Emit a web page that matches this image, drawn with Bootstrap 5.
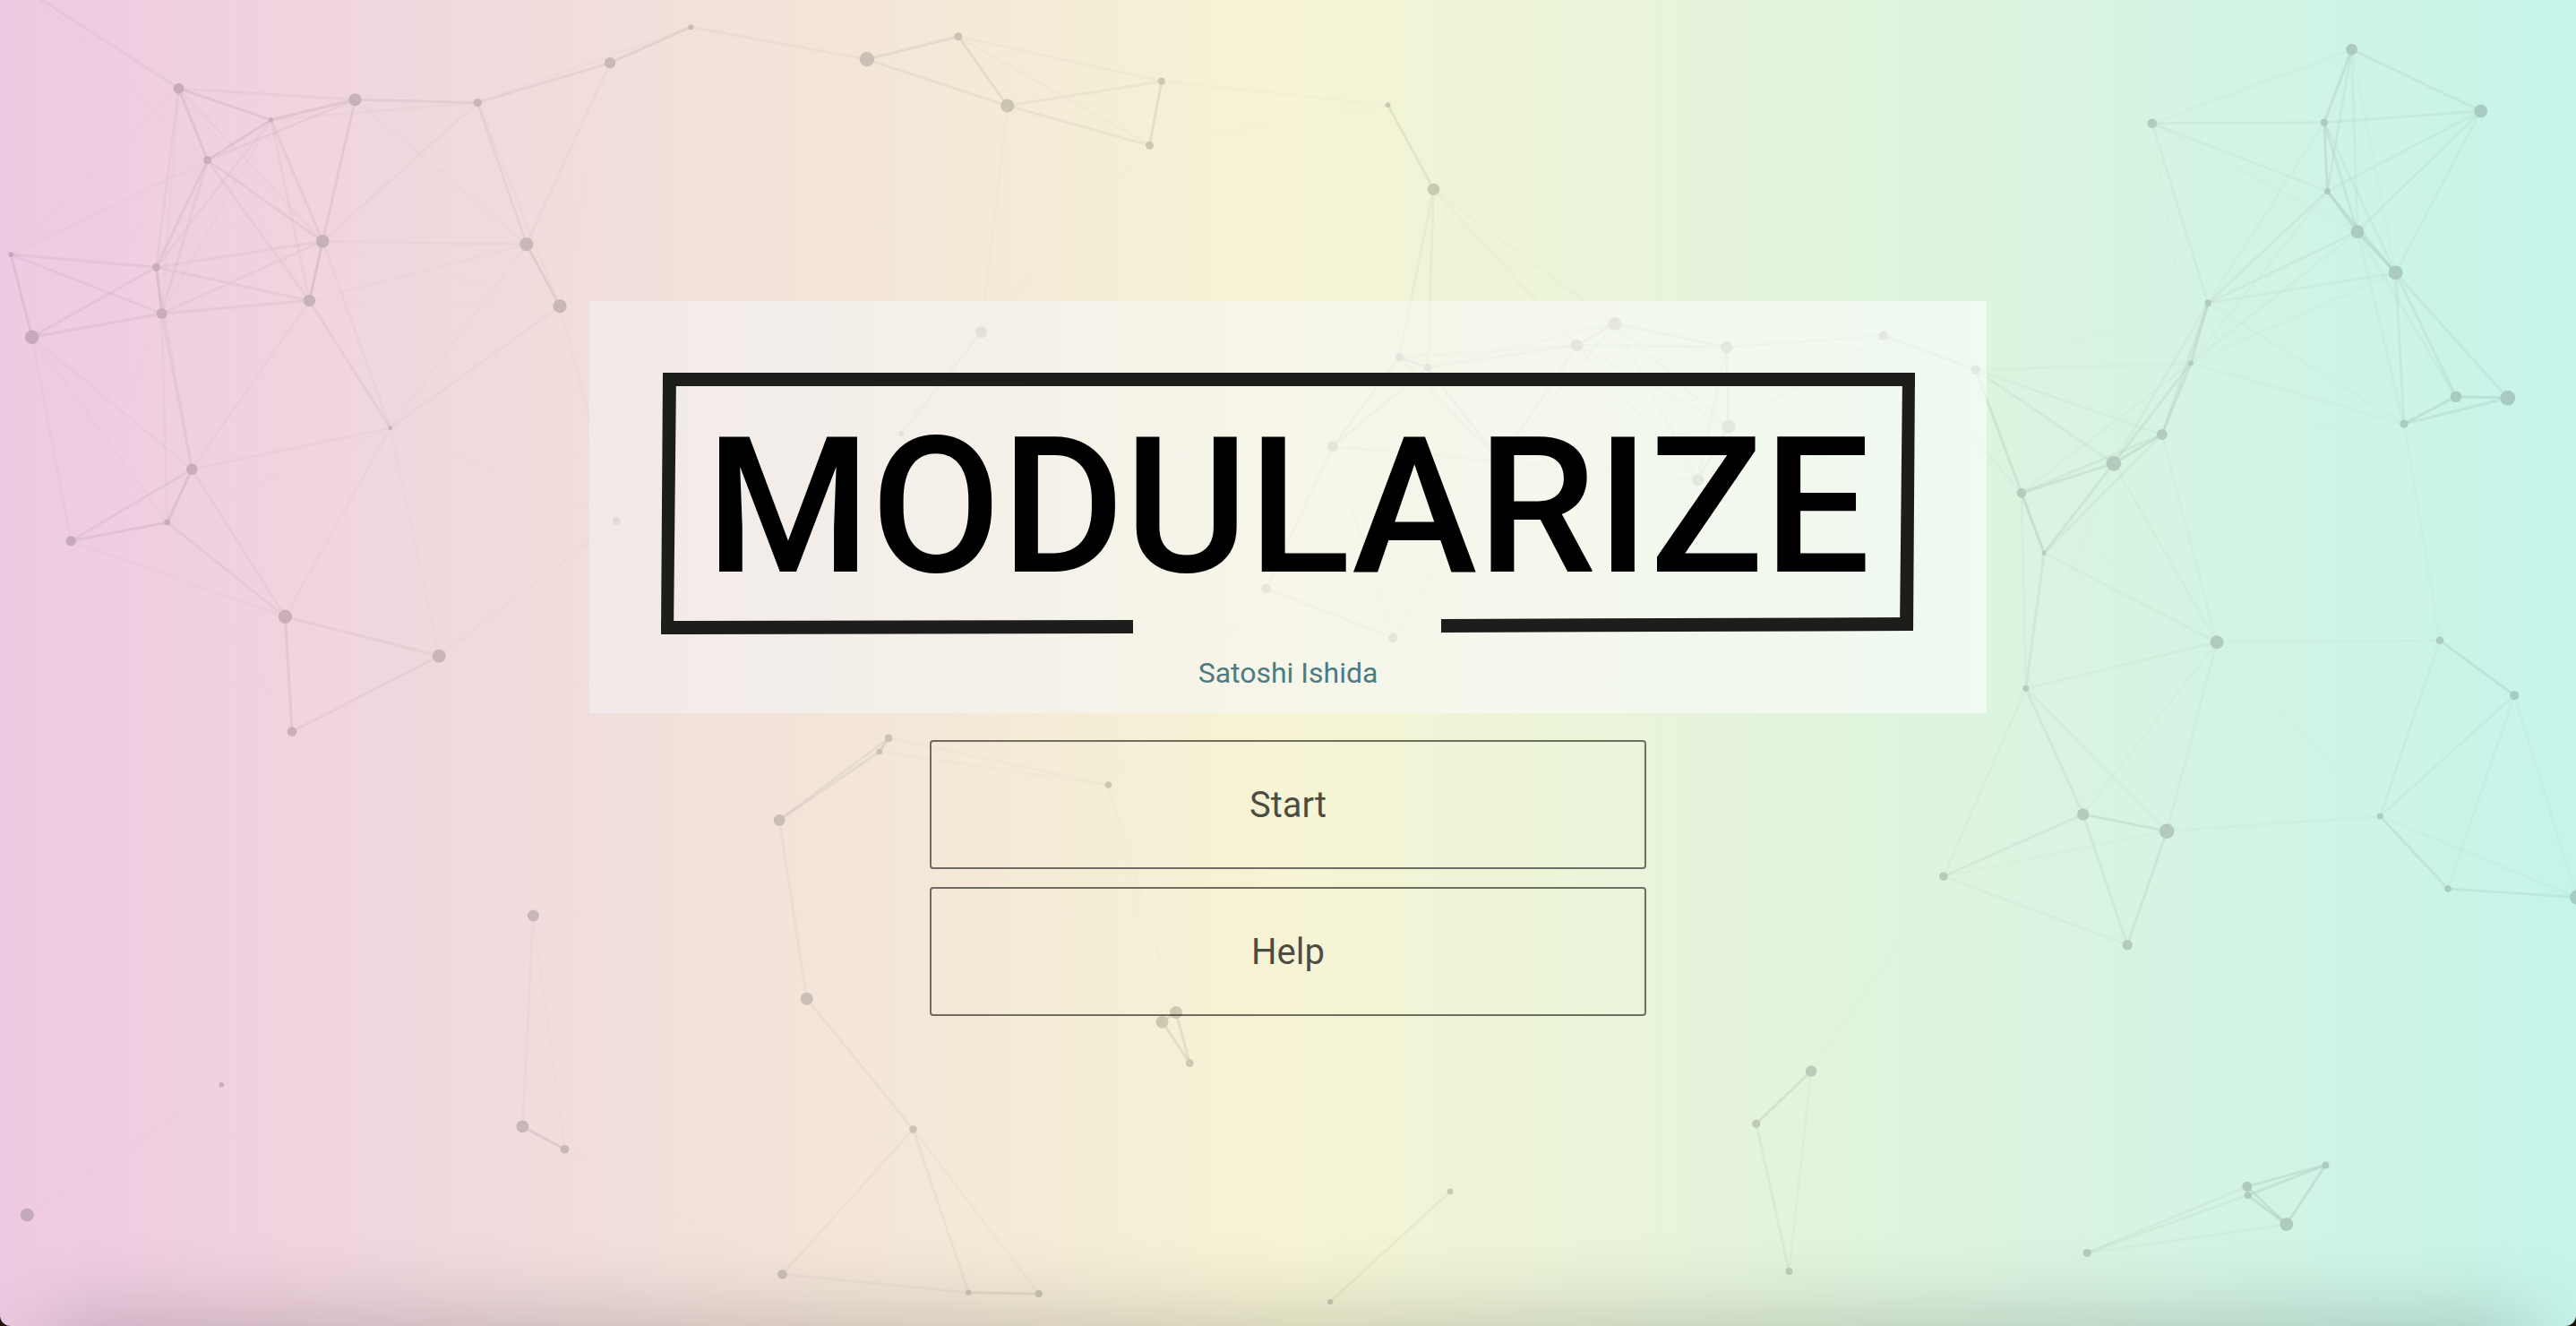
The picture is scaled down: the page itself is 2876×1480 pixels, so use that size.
<!DOCTYPE html>
<html lang="en">
<head>
<meta charset="utf-8">
<meta name="viewport" content="width=device-width, initial-scale=1">
<title>Modularize</title>
<link href="https://cdn.jsdelivr.net/npm/bootstrap@5.3.0/dist/css/bootstrap.min.css" rel="stylesheet">
<style>
  body { background: #24120a; font-family: Roboto, "Liberation Sans", sans-serif; }
  .start-screen {
    background: linear-gradient(90deg, #eecae2, #f6f4d4 50%, #c6f4ea);
    border-radius: 0 0 12px 12px;
    padding-bottom: 10px;
  }
  .particle-field { z-index: 0; }
  .floor-shadow {
    top: 100%; left: 50px; right: 50px; height: 200px;
    box-shadow: 0 0 100px rgba(0, 0, 0, .22);
  }
  .title-panel {
    width: 1560px; max-width: 100%;
    padding: 80px 80px 21px;
    background: linear-gradient(90deg, rgba(242, 242, 242, .6), rgba(247, 247, 247, .6) 50%, rgba(253, 254, 253, .6));
  }
  .game-title {
    font-size: 211px; font-weight: 500; line-height: 292px;
    padding-top: 4px; margin-bottom: -4px; color: #000;
  }
  .author-link { font-size: 32px; line-height: 48px; margin-top: 19px; color: #4e7b7f; }
  .menu-list { width: 800px; max-width: 100%; margin-top: 30px; gap: 20px; }
  .menu-btn {
    --bs-btn-color: rgba(0, 0, 0, .7);
    --bs-btn-border-color: rgba(0, 0, 0, .54);
    --bs-btn-border-width: 2px;
    --bs-btn-border-radius: 4px;
    --bs-btn-font-size: 40px;
    --bs-btn-line-height: 60px;
    --bs-btn-hover-bg: rgba(0, 0, 0, .06);
    --bs-btn-hover-border-color: rgba(0, 0, 0, .6);
    padding-top: 41px; padding-bottom: 39px;
  }
</style>
</head>
<body>
<div class="start-screen position-relative overflow-hidden min-vh-100 d-flex flex-column align-items-center justify-content-center">
  <svg id="particles" class="particle-field position-absolute top-0 start-0 w-100 h-100" viewBox="0 0 2876 1480" preserveAspectRatio="xMidYMid slice" aria-hidden="true"></svg>
  <div class="floor-shadow position-absolute"></div>

  <main class="position-relative d-flex flex-column align-items-center mw-100">
    <header class="title-panel d-flex flex-column align-items-center">
      <div class="position-relative w-100 text-center">
        <svg class="position-absolute top-0 start-0 w-100 h-100" viewBox="0 0 1400 292" fill="#1d1e1b" aria-hidden="true">
          <path d="M2 0H1400V15H2Z"/>
          <path d="M2 0H17L14 292H0Z"/>
          <path d="M0 277L527 276V291L0 292Z"/>
          <path d="M1386 0H1400L1398 288H1383Z"/>
          <path d="M871 275L1398 273V288L871 290Z"/>
        </svg>
        <h1 class="game-title position-relative">MODULARIZE</h1>
      </div>
      <a class="author-link text-decoration-none" href="#">Satoshi Ishida</a>
    </header>
    <nav class="menu-list d-flex flex-column">
      <button type="button" class="btn menu-btn">Start</button>
      <button type="button" class="btn menu-btn">Help</button>
    </nav>
  </main>
</div>
<script src="https://cdn.jsdelivr.net/npm/bootstrap@5.3.0/dist/js/bootstrap.bundle.min.js"></script>
<script>
  // Each particle: x, y, radius
  const particles = [
    [38,-6,6],[199.5,98.7,6],[302.5,133.8,2.7],[396.4,111.3,7],[231.6,178.8,4.5],[533.2,114.6,4.7],
    [681.1,70.2,6.2],[771.4,30.2,3],[360.2,269.3,7.4],[587.8,272.6,7.6],[625,341.7,7.6],[174.5,298.3,4.4],
    [180.6,349.9,6],[345.4,335.6,6.7],[12.2,284.1,2.8],[35.7,376.2,7.8],[435.7,477.7,2.3],[214.3,523.8,6.2],
    [186.7,583,3.4],[79.1,603.8,5.6],[318.4,688.3,7.7],[490.3,732.2,7.4],[326,816.6,5.3],[688.3,581.4,4.6],
    [1095.6,370.7,6.5],[1006.3,484,3],[1413.5,657,5.2],[1802.8,361.3,7.3],[1760.4,385.3,6.6],[1927.8,387.3,6.6],
    [2102.8,374.7,5.4],[2205.8,412.7,5.2],[1562.4,398.7,4.8],[1594,410.3,4.2],[1488,498.3,6.1],[1929.8,476,7.6],
    [1895.6,535.7,6.5],[1555.3,711.7,5.2],[1675,515,5],[1237.4,876,3.7],[1313,1130,7],[1297.5,1140.7,7],
    [1328.3,1186.7,4.4],[2625.6,55.2,6.4],[2769.6,123.9,7.4],[2402.9,137.8,5.4],[2594.9,136.8,4],[2598.4,213.4,3.4],
    [2632,258.7,7.4],[2674.6,304.4,8],[2465.2,338.3,3.7],[2445.9,405.4,3],[2413.8,485,6.1],[2359.8,517.3,8.4],
    [2256.9,550.2,5.4],[2282.1,617.3,2.5],[2684,473.1,4.6],[2741.9,442.7,6.3],[2799.8,444.2,8.4],[2475.1,716.8,7.5],
    [2724,714.8,4.3],[2261.8,768.5,3.4],[2807.2,776.1,5.2],[2325.7,908.9,6.7],[2419.2,927.8,8.3],[2657.3,910.9,3.5],
    [2169.8,978.1,4.8],[2375.2,1054.7,5.6],[2733,992,3.8],[2877,1001.5,8],[2596.4,1300.4,4],[2508.8,1324.3,5.5],
    [2509.8,1334.2,4],[2552.8,1366.6,7.4],[2330.1,1398.4,4.5],[967.9,66.3,8.2],[1069.9,40.7,4.5],[1124.7,118,7.6],
    [1296.9,90.7,3.9],[1283.5,162.3,4.5],[1549.5,117.3,3],[1600.5,211.3,6.8],[595.3,1022,6.5],[583.4,1257.3,6.9],
    [630.5,1282.8,4.8],[992.2,823.9,4.3],[981.7,839.1,3.4],[870.1,915.4,6.4],[900.7,1114.8,7.1],[1019.5,1260.5,4.3],
    [873.5,1422.2,5.3],[1081.3,1442.8,3.2],[1159.7,1443.9,4.2],[247.3,1210.8,2.8],[30.3,1356,7.6],
    [1485.1,1453.1,3.2],[1619.1,1329.8,3.4],[1960.7,1254.3,4.6],[2022,1195.5,6.2],[1997.4,1419,4]
  ];
  const reach = 285;      // particles closer than this are linked
  const linkStrength = 0.58;
  let links = '', dots = '';
  particles.forEach(([x, y, r], i) => {
    dots += `<circle cx="${x}" cy="${y}" r="${r}"/>`;
    for (const [u, v] of particles.slice(i + 1)) {
      const d = Math.hypot(x - u, y - v);
      if (d < reach) {
        const fade = linkStrength * (1 - d / reach);
        links += `<path d="M${x} ${y}L${u} ${v}" stroke="#000" stroke-width="3" stroke-opacity="${fade.toFixed(3)}"/>`;
      }
    }
  });
  document.getElementById('particles').innerHTML = `<g opacity="0.16">${links}${dots}</g>`;
</script>
</body>
</html>
